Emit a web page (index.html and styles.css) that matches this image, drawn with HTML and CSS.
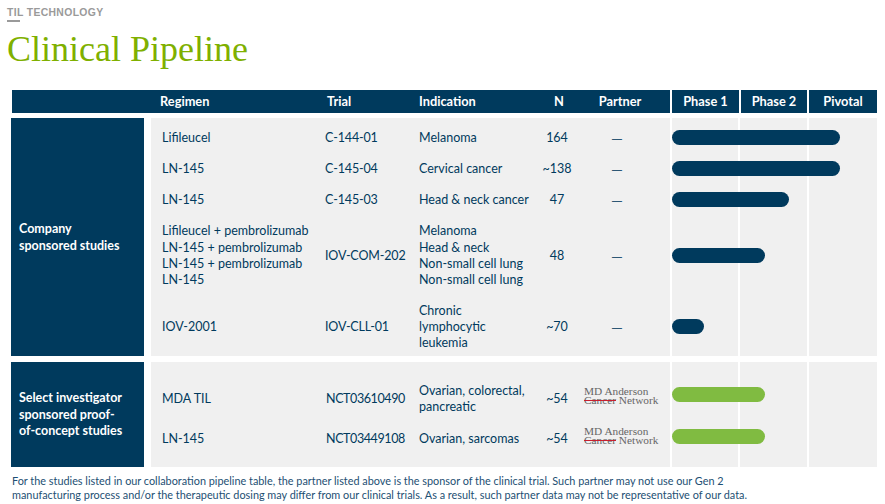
FILE: index.html
```html
<!DOCTYPE html>
<html lang="en">
<head>
<meta charset="utf-8">
<title>Clinical Pipeline</title>
<link rel="stylesheet" href="styles.css">
</head>
<body>
<header class="top">
  <div class="eyebrow">TIL TECHNOLOGY</div>
  <h1 class="title">Clinical Pipeline</h1>
</header>
<main class="table">
  <div class="head">
    <div class="head-main">
      <span class="h-regimen">Regimen</span>
      <span class="h-trial">Trial</span>
      <span class="h-ind">Indication</span>
      <span class="h-n">N</span>
      <span class="h-partner">Partner</span>
    </div>
    <span class="head-phase">Phase 1</span>
    <span class="head-phase">Phase 2</span>
    <span class="head-phase">Pivotal</span>
  </div>

  <section class="group group-company">
    <div class="label">Company<br>sponsored studies</div>
    <div class="rows">
      <div class="stripes"><i></i><i></i><i></i></div>
      <div class="row r1">
        <span class="c-regimen">Lifileucel</span><span class="c-trial">C-144-01</span><span class="c-ind">Melanoma</span><span class="c-n">164</span><span class="c-partner dash">—</span>
        <div class="track"><div class="bar navy w-pivotal"></div></div>
      </div>
      <div class="row r2">
        <span class="c-regimen">LN-145</span><span class="c-trial">C-145-04</span><span class="c-ind">Cervical cancer</span><span class="c-n">~138</span><span class="c-partner dash">—</span>
        <div class="track"><div class="bar navy w-pivotal"></div></div>
      </div>
      <div class="row r3">
        <span class="c-regimen">LN-145</span><span class="c-trial">C-145-03</span><span class="c-ind">Head &amp; neck cancer</span><span class="c-n">47</span><span class="c-partner dash">—</span>
        <div class="track"><div class="bar navy w-late"></div></div>
      </div>
      <div class="row r4">
        <span class="c-regimen">Lifileucel + pembrolizumab<br>LN-145 + pembrolizumab<br>LN-145 + pembrolizumab<br>LN-145</span><span class="c-trial">IOV-COM-202</span><span class="c-ind">Melanoma<br>Head &amp; neck<br>Non-small cell lung<br>Non-small cell lung</span><span class="c-n">48</span><span class="c-partner dash">—</span>
        <div class="track"><div class="bar navy w-mid"></div></div>
      </div>
      <div class="row r5">
        <span class="c-regimen">IOV-2001</span><span class="c-trial">IOV-CLL-01</span><span class="c-ind">Chronic<br>lymphocytic<br>leukemia</span><span class="c-n">~70</span><span class="c-partner dash">—</span>
        <div class="track"><div class="bar navy w-short"></div></div>
      </div>
    </div>
  </section>

  <section class="group group-select">
    <div class="label">Select investigator<br>sponsored proof-<br>of-concept studies</div>
    <div class="rows">
      <div class="stripes"><i></i><i></i><i></i></div>
      <div class="row r6">
        <span class="c-regimen">MDA TIL</span><span class="c-trial">NCT03610490</span><span class="c-ind">Ovarian, colorectal,<br>pancreatic</span><span class="c-n">~54</span>
        <span class="logo"><span class="logo-a">MD Anderson</span><span class="logo-b"><s>Cancer</s> Network</span></span>
        <div class="track"><div class="bar green w-mid"></div></div>
      </div>
      <div class="row r7">
        <span class="c-regimen">LN-145</span><span class="c-trial">NCT03449108</span><span class="c-ind">Ovarian, sarcomas</span><span class="c-n">~54</span>
        <span class="logo"><span class="logo-a">MD Anderson</span><span class="logo-b"><s>Cancer</s> Network</span></span>
        <div class="track"><div class="bar green w-mid"></div></div>
      </div>
    </div>
  </section>
</main>
<footer class="note">For the studies listed in our collaboration pipeline table, the partner listed above is the sponsor of the clinical trial. Such partner may not use our Gen 2<br>manufacturing process and/or the therapeutic dosing may differ from our clinical trials. As a result, such partner data may not be representative of our data.</footer>
</body>
</html>
```

FILE: styles.css
```css
* { box-sizing: border-box; }
html, body { margin: 0; padding: 0; }
body {
  width: 885px;
  height: 504px;
  overflow: hidden;
  background: #fff;
  font-family: Lato, "Liberation Sans", sans-serif;
  color: #003a5d;
}
.top { padding: 7px 0 0 7px; height: 90px; }
.eyebrow {
  position: relative;
  font-family: "Liberation Sans", sans-serif;
  font-weight: 700;
  font-size: 10.4px;
  line-height: 11px;
  letter-spacing: 0.35px;
  color: #9a9a9a;
}
.eyebrow::after {
  content: "";
  position: absolute;
  left: 0;
  top: 13px;
  width: 13px;
  height: 1.5px;
  background: #9a9a9a;
}
.title {
  margin: 9px 0 0;
  font-family: "Liberation Serif", serif;
  font-weight: 400;
  font-size: 36px;
  line-height: 44px;
  color: #7fb000;
}
.table { margin-left: 12px; width: 865px; }
.head {
  display: grid;
  grid-template-columns: 658px 69px 68px 70px;
  height: 23px;
  background: #003a5d;
  color: #fff;
  font-weight: 700;
  font-size: 12.8px;
  line-height: 23px;
}
.head-main {
  display: grid;
  grid-template-columns: 148px 167px 92px 116.5px 47px 75px;
}
.h-regimen { grid-column: 2; }
.h-trial { grid-column: 3; }
.h-ind { grid-column: 4; }
.h-n { grid-column: 5; text-align: center; }
.h-partner { grid-column: 6; text-align: center; }
.head-phase { text-align: center; border-left: 2px solid #fff; }
.group { display: flex; gap: 7px; }
.group-company { margin-top: 5px; height: 238px; }
.group-select { margin-top: 6px; height: 105px; }
.label {
  flex: 0 0 133px;
  margin-left: -1px;
  display: flex;
  align-items: center;
  padding: 1px 0 0 8px;
  background: #003a5d;
  color: #fff;
  font-weight: 700;
  font-size: 12.5px;
  line-height: 16.5px;
}
.rows {
  position: relative;
  flex: 1;
  background: #f0f0f0;
  font-size: 12.5px;
  line-height: 16.3px;
}
.stripes {
  position: absolute;
  inset: 0;
  pointer-events: none;
}
.stripes i { position: absolute; top: 0; bottom: 0; width: 2px; background: #fff; }
.stripes i:nth-child(1) { left: 519px; }
.stripes i:nth-child(2) { left: 587px; }
.stripes i:nth-child(3) { left: 656px; }
.row {
  position: relative;
  display: grid;
  grid-template-columns: 163px 94px 125px 48px 88px 208px;
  align-items: center;
}
.c-regimen { padding-left: 11px; }
.c-trial { padding-left: 11px; white-space: nowrap; letter-spacing: -0.15px; }
.c-ind { padding-left: 11px; white-space: nowrap; }
.c-n { text-align: center; }
.c-partner { text-align: center; padding-right: 16px; }
.dash { color: #2c5775; font-size: 15px; }
.r1 { height: 31px; margin-top: 5px; }
.r2 { height: 31px; }
.r3 { height: 31px; }
.r4 { height: 72px; margin-top: 4px; }
.r5 { height: 54px; margin-top: 8px; }
.group-select .rows { padding-top: 15px; }
.r6 { height: 44px; }
.r7 { height: 36px; }
.r6 .c-trial, .r7 .c-trial { padding-left: 12px; letter-spacing: -0.4px; }
.track { padding-left: 3px; }
.r1 .track, .r2 .track, .r3 .track, .r4 .track, .r5 .track { transform: translateY(-1px); }
.r6 .track { transform: translateY(-5px); }
.r7 .track { transform: translateY(-3px); }
.bar { height: 15px; border-radius: 8px; }
.navy { background: #003a5d; }
.green { background: #80bb41; }
.w-pivotal { width: 168px; }
.w-late { width: 117px; }
.w-mid { width: 93px; }
.w-short { width: 32px; }
.logo {
  display: flex;
  flex-direction: column;
  align-items: flex-start;
  padding-left: 3px;
  margin-top: -6px;
  font-family: "Liberation Serif", serif;
  font-size: 11.3px;
  line-height: 9.5px;
  color: #666;
  white-space: nowrap;
}
.logo s { text-decoration-color: #c8202f; }
.note {
  margin: 7px 0 0 12px;
  font-size: 10.87px;
  line-height: 14px;
  color: #1d4f73;
  white-space: nowrap;
}
```
